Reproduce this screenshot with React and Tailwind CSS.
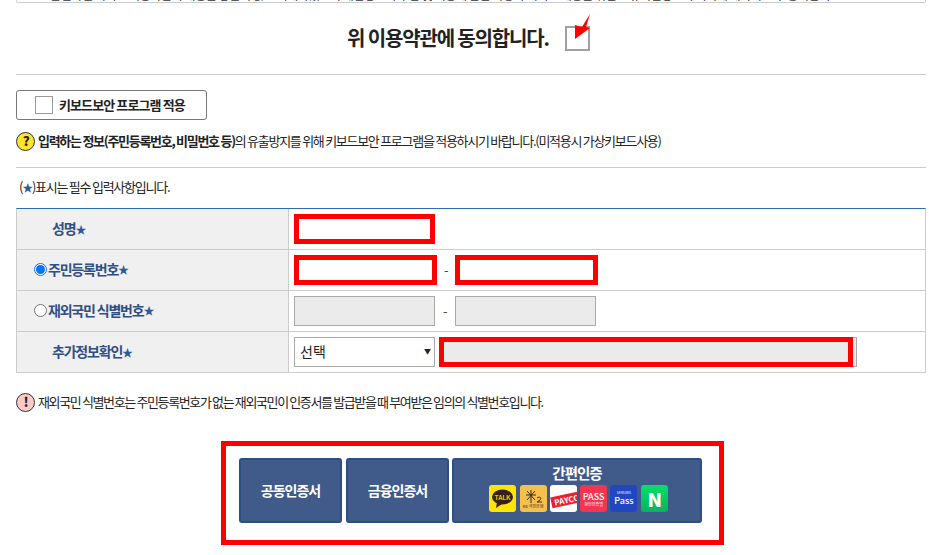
const FONT = "font-['Noto_Sans_CJK_KR','Liberation_Sans',sans-serif]";

function Star() {
  return <span className="text-[11px] text-[#2f5a9e]">★</span>;
}

function Radio({ checked }) {
  return (
    <span
      className={`mr-[1px] flex h-[13px] w-[13px] shrink-0 items-center justify-center rounded-full border bg-white ${
        checked ? "border-[#0075ff]" : "border-[#767676]"
      }`}
    >
      {checked ? <span className="h-[9px] w-[9px] rounded-full bg-[#0075ff]" /> : null}
    </span>
  );
}

function Field({ width = "w-[141px]", flagged, disabled }) {
  return (
    <div
      className={`h-[30px] ${width} ${disabled ? "bg-[#ebebeb]" : "bg-white"} ${
        flagged ? "border-[5px] border-[#ff0000]" : "border border-[#a9a9a9]"
      }`}
    />
  );
}

function Row({ label, children, last }) {
  return (
    <div className={`flex ${last ? "h-[40px]" : "h-[41px] border-b border-[#cccccc]"}`}>
      <div className="flex w-[272px] shrink-0 items-center border-r border-[#cccccc] bg-[#f0f0f0] pb-[2px] text-[14px] font-bold tracking-[-1.2px] text-[#2f4f86]">
        {label}
      </div>
      <div className="flex min-w-0 flex-1 items-center pl-[5px]">{children}</div>
    </div>
  );
}

function Dash({ className }) {
  return <span className={`w-[4px] text-center text-[13px] text-[#444] ${className}`}>-</span>;
}

function AuthLogos() {
  return (
    <div className="ml-[3px] flex gap-[3.3px]">
      <div className="flex h-[27px] w-[27px] items-center justify-center rounded-[3px] bg-[#fee500]">
        <svg width="23" height="21" viewBox="0 0 23 21">
          <ellipse cx="11.5" cy="9" rx="10.5" ry="7.5" fill="#3a1d1d" />
          <path d="M6 14l-1 6 6-4z" fill="#3a1d1d" />
          <text x="11.5" y="11.5" textAnchor="middle" fontSize="6.5" fontWeight="700" letterSpacing="0" fill="#e8c800">TALK</text>
        </svg>
      </div>
      <div className="flex h-[27px] w-[27px] flex-col items-center justify-center rounded-[3px] bg-[#f5c04d]">
        <svg width="20" height="15" viewBox="0 0 20 15" stroke="#3a2f1a" strokeWidth="1" fill="none">
          <path d="M8 1v13M3 6h10M4 2l8 9M12 2l-8 9" />
          <path d="M14 9c3-2 5 0 3 2l-3 2h5" />
        </svg>
        <span className="text-[4px] leading-[5px] font-normal tracking-normal text-[#3a2f1a]">KB 국민은행</span>
      </div>
      <div className="relative h-[27px] w-[27px] overflow-hidden rounded-[3px] bg-white">
        <div className="absolute left-[1px] top-[9px] w-[32px] -rotate-12 bg-[#e8212e] pl-[3px] text-[8px] font-bold leading-[11px] tracking-normal whitespace-nowrap text-white">
          PAYCO
        </div>
      </div>
      <div className="flex h-[27px] w-[27px] flex-col items-center justify-center rounded-[3px] bg-[#f5354f] text-white">
        <span className="text-[9px] font-medium leading-[11px] tracking-normal">PASS</span>
        <span className="text-[4px] font-normal leading-[5px] tracking-normal">본인인증앱</span>
      </div>
      <div className="flex h-[27px] w-[27px] flex-col items-center justify-center rounded-[3px] bg-[#2146c0] text-white">
        <span className="text-[3px] font-normal leading-[5px] tracking-normal">SAMSUNG</span>
        <span className="text-[9px] font-medium leading-[10px] tracking-normal">Pass</span>
      </div>
      <div className="flex h-[27px] w-[27px] items-center justify-center rounded-[3px] bg-gradient-to-b from-[#06e06a] to-[#06b45a] text-[19px] font-black leading-none text-white">
        N
      </div>
    </div>
  );
}

function AuthButton({ className, children }) {
  return (
    <div className={`flex h-[65px] flex-col items-center rounded-[3px] border-2 border-[#2d4d85] bg-[#405a8a] text-[14px] font-bold tracking-[-1px] text-white ${className}`}>
      {children}
    </div>
  );
}

export default function App() {
  return (
    <div className={`h-[555px] w-[929px] overflow-hidden bg-white pl-[16px] pr-[3px] text-[#222] ${FONT}`}>
      <div className="relative h-[3px] overflow-hidden rounded-b-[2px] border-x border-b border-[#cccccc] text-[12px]">
        <div className="absolute -top-[14px] left-[33px] w-[782px] overflow-hidden whitespace-nowrap leading-[18px] tracking-[-0.4px] text-[#333]">
          본인확인 서비스 이용약관의 내용을 충분히 읽고 이해하였으며 개인정보의 수집 및 이용에 관한 사항과 서비스 제공을 위한 고유식별정보의 처리에 대하여 모두 동의합니다 본인확인 서비스 이용약관
        </div>
      </div>

      <div className="flex h-[71px] items-center justify-center pb-[2px] pr-[5px]">
        <span className="text-[20px] font-bold tracking-[-1.15px] text-[#222]">위 이용약관에 동의합니다.</span>
        <span className="relative ml-[16px] mt-[2px] h-[25px] w-[25px] border-2 border-[#a0a0a0] bg-white">
          <svg className="absolute -left-[2px] -top-[16px]" width="26" height="30" viewBox="0 0 26 30">
            <path d="M25 2L21 15L25 16L10 27L10 13L17 15z" fill="#ff0000" />
          </svg>
        </span>
      </div>

      <div className="border-t border-[#cccccc] pt-[15px]">
        <div className="flex h-[30px] w-[191px] items-center rounded-[3px] border border-[#777] pl-[18px] text-[13px] font-bold tracking-[-0.9px]">
          <span className="mr-[6px] h-[18px] w-[18px] border border-[#999]" />
          키보드보안 프로그램 적용
        </div>
        <div className="mt-[10px] flex h-[22px] items-center whitespace-nowrap text-[13px] tracking-[-1.28px] text-[#222]">
          <span className="mr-[3px] flex h-[19px] w-[19px] items-center justify-center rounded-full border border-[#333] bg-[#fde428] text-[13px] font-black">?</span>
          <b>입력하는 정보(주민등록번호, 비밀번호 등)</b>의 유출방지를 위해 키보드보안 프로그램을 적용하시기 바랍니다.(미적용시 가상키보드사용)
        </div>
      </div>

      <div className="mt-[15px] border-t border-[#cccccc] pl-[3px] pt-[9px] text-[13px] leading-[20px] tracking-[-1.25px]">
        (<span className="text-[11px] text-[#2f5a9e]">★</span>)표시는 필수 입력사항입니다.
      </div>

      <div className="mt-[11px] border-x border-b border-t border-x-[#cccccc] border-b-[#cccccc] border-t-[#2f6ab5]">
        <Row label={<span className="pl-[35px]">성명<Star /></span>}>
          <Field flagged />
        </Row>
        <Row
          label={
            <span className="flex items-center pl-[17px]">
              <Radio checked />
              주민등록번호<Star />
            </span>
          }
        >
          <Field flagged width="w-[143px]" />
          <Dash className="mx-[7px]" />
          <Field flagged width="w-[143px]" />
        </Row>
        <Row
          label={
            <span className="flex items-center pl-[17px]">
              <Radio />
              재외국민 식별번호<Star />
            </span>
          }
        >
          <Field disabled />
          <Dash className="mx-[8px]" />
          <Field disabled />
        </Row>
        <Row last label={<span className="pl-[35px]">추가정보확인<Star /></span>}>
          <div className="flex h-[30px] w-[141px] items-center justify-between border border-[#a9a9a9] bg-white pb-[2px] pl-[5px] pr-[3px] text-[14px]">
            선택
            <span className="text-[7px]">▼</span>
          </div>
          <div className="relative ml-[4px] h-[30px] w-[418px] border border-[#a9a9a9] bg-[#ebebeb]">
            <div className="absolute -left-[1px] -top-[1px] h-[30px] w-[414px] border-[5px] border-[#ff0000]" />
          </div>
        </Row>
      </div>

      <div className="mt-[18px] flex h-[22px] items-center whitespace-nowrap text-[13px] tracking-[-1.37px]">
        <span className="mr-[3px] flex h-[19px] w-[19px] items-center justify-center rounded-full border border-[#333] bg-[#ffc9c5] text-[13px] font-black">!</span>
        재외국민 식별번호는 주민등록번호가 없는 재외국민이 인증서를 발급받을 때 부여받은 임의의 식별번호입니다.
      </div>

      <div className="ml-[205px] mt-[28px] flex h-[104px] w-[503px] items-start border-[5px] border-[#ff0000] pl-[13px] pt-[12px]">
        <AuthButton className="w-[103px] justify-center">공동인증서</AuthButton>
        <AuthButton className="ml-[4px] w-[103px] justify-center">금융인증서</AuthButton>
        <AuthButton className="ml-[3px] w-[250px] pt-[4px]">
          <span className="mb-[3px] text-[14.5px] leading-[18px]">간편인증</span>
          <AuthLogos />
        </AuthButton>
      </div>
    </div>
  );
}
